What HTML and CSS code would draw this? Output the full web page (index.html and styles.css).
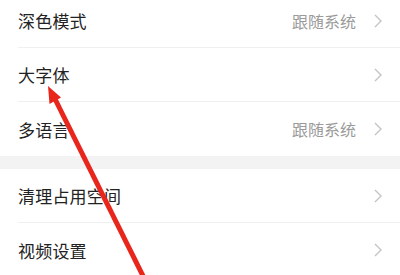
FILE: index.html
```html
<!DOCTYPE html>
<html lang="zh-CN">
<head>
<meta charset="utf-8">
<link rel="stylesheet" href="styles.css">
</head>
<body>
<div class="page">
  <div class="group">
    <div class="row">
      <span class="label">深色模式</span>
      <span class="right"><span class="value">跟随系统</span><svg class="chev" viewBox="0 0 10 16" width="10" height="16"><path d="M2 2 L8 8 L2 14" fill="none" stroke="#c4c4c4" stroke-width="1.4"/></svg></span>
    </div>
    <div class="row">
      <span class="label">大字体</span>
      <span class="right"><svg class="chev" viewBox="0 0 10 16" width="10" height="16"><path d="M2 2 L8 8 L2 14" fill="none" stroke="#c4c4c4" stroke-width="1.4"/></svg></span>
    </div>
    <div class="row">
      <span class="label">多语言</span>
      <span class="right"><span class="value">跟随系统</span><svg class="chev" viewBox="0 0 10 16" width="10" height="16"><path d="M2 2 L8 8 L2 14" fill="none" stroke="#c4c4c4" stroke-width="1.4"/></svg></span>
    </div>
  </div>
  <div class="band"></div>
  <div class="group">
    <div class="row">
      <span class="label">清理占用空间</span>
      <span class="right"><svg class="chev" viewBox="0 0 10 16" width="10" height="16"><path d="M2 2 L8 8 L2 14" fill="none" stroke="#c4c4c4" stroke-width="1.4"/></svg></span>
    </div>
    <div class="row">
      <span class="label">视频设置</span>
      <span class="right"><svg class="chev" viewBox="0 0 10 16" width="10" height="16"><path d="M2 2 L8 8 L2 14" fill="none" stroke="#c4c4c4" stroke-width="1.4"/></svg></span>
    </div>
  </div>
  <svg class="arrow" viewBox="0 0 400 275" width="400" height="275">
    <line x1="55" y1="99" x2="150" y2="290" stroke="#e8261c" stroke-width="5"/>
    <polygon points="48,86 49.5,104 61,97.5" fill="#e8261c"/>
  </svg>
</div>
</body>
</html>
```
FILE: styles.css
```css
html, body {
  margin: 0;
  padding: 0;
  background: #ffffff;
}
body {
  width: 400px;
  height: 275px;
  overflow: hidden;
  font-family: "Noto Sans CJK SC", "Noto Sans", sans-serif;
}
.page {
  position: relative;
  width: 400px;
  height: 275px;
  overflow: hidden;
}
.group {
  display: flex;
  flex-direction: column;
}
.group:first-child {
  margin-top: -6px;
}
.row {
  height: 53px;
  margin-left: 18px;
  padding-right: 17px;
  display: flex;
  align-items: center;
  justify-content: space-between;
  border-bottom: 1px solid #f0f0f0;
}
.row:last-child {
  border-bottom: none;
  height: 54px;
}
.label {
  font-size: 17px;
  color: #222222;
  letter-spacing: 0.2px;
}
.right {
  display: flex;
  align-items: center;
  gap: 17px;
}
.value {
  font-size: 16px;
  color: #9a9a9a;
}
.chev {
  display: block;
}
.band {
  height: 13px;
  background: #f3f3f3;
}
.arrow {
  position: absolute;
  left: 0;
  top: 0;
  pointer-events: none;
}
```
